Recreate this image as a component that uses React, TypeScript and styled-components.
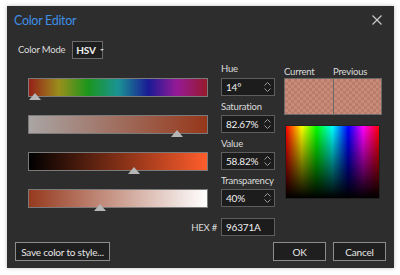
import React from 'react'
import styled, { createGlobalStyle } from 'styled-components'

const GlobalStyle = createGlobalStyle`
  html, body {
    margin: 0;
    padding: 0;
    background: #ffffff;
  }
  body {
    font-family: Lato, "Noto Sans", sans-serif;
    font-size: 9.5px;
    letter-spacing: -0.2px;
    color: #dcdcdc;
  }
`

const Page = styled.div`
  width: 400px;
  height: 275px;
  padding: 6px 0 0 7px;
  box-sizing: border-box;
`

const Window = styled.div`
  width: 387px;
  height: 262px;
  background: #2d2d2d;
  box-shadow: 0 0 4px rgba(0, 0, 0, 0.25);
  box-sizing: border-box;
  display: flex;
  flex-direction: column;
`

const TitleBar = styled.div`
  height: 27px;
  display: flex;
  align-items: center;
  justify-content: space-between;
  padding: 0 12px 0 7px;
`

const Title = styled.div`
  color: #3f8fe6;
  font-size: 12.5px;
  letter-spacing: -0.3px;
  padding-top: 2px;
`

const CloseButton = styled.div`
  width: 10px;
  height: 10px;
  display: flex;
  align-items: center;
  justify-content: center;
`

const ModeRow = styled.div`
  display: flex;
  align-items: center;
  gap: 7px;
  height: 19px;
  margin-top: 7px;
  padding-left: 11px;
`

const Dropdown = styled.div`
  height: 18px;
  width: 31px;
  border: 1px solid #6a6a6a;
  background: #1e1e1e;
  box-sizing: border-box;
  display: flex;
  align-items: center;
  gap: 4px;
  padding-left: 3px;
  color: #f0f0f0;
  font-size: 10px;
  font-weight: 700;
`

const Caret = styled.span`
  width: 0;
  height: 0;
  border-left: 2px solid transparent;
  border-right: 2px solid transparent;
  border-top: 2px solid #d0d0d0;
`

const Body = styled.div`
  display: grid;
  grid-template-columns: 180px 54px 98px;
  column-gap: 13px;
  grid-template-rows: 19px 19px 18px 19px 18px 19px 18px 19px 10px 19px;
  padding-left: 21px;
`

const FieldLabel = styled.div<{ $row: number }>`
  grid-column: 2;
  grid-row: ${(p) => p.$row};
  display: flex;
  align-items: center;
  white-space: nowrap;
`

const BarCell = styled.div<{ $row: number }>`
  grid-column: 1;
  grid-row: ${(p) => p.$row};
  position: relative;
`

const Bar = styled.div<{ $bg: string }>`
  height: 19px;
  box-sizing: border-box;
  border: 1px solid #7a7a7a;
  background: ${(p) => p.$bg};
`

const Thumb = styled.div`
  position: absolute;
  top: 15px;
  width: 0;
  height: 0;
  margin-left: -6px;
  border-left: 6px solid transparent;
  border-right: 6px solid transparent;
  border-bottom: 7px solid #b6b6b6;
`

const InputBox = styled.div<{ $row: number }>`
  grid-column: 2;
  grid-row: ${(p) => p.$row};
  height: 18px;
  border: 1px solid #5e5e5e;
  background: #1c1c1c;
  box-sizing: border-box;
  display: flex;
  align-items: center;
  justify-content: space-between;
  padding: 0 3px 0 4px;
  color: #f0f0f0;
  font-size: 10px;
`

const Spinner = styled.div`
  display: flex;
  flex-direction: column;
  gap: 2px;
`

const HexLabel = styled.div`
  grid-column: 1;
  grid-row: 10;
  display: flex;
  align-items: center;
  justify-content: flex-end;
  margin-right: -9px;
`

const PreviewColumn = styled.div`
  grid-column: 3;
  grid-row: 1 / 9;
  display: flex;
  flex-direction: column;
  margin-left: -4px;
`

const PreviewLabels = styled.div`
  display: flex;
  height: 19px;
  align-items: flex-end;
  padding-bottom: 1px;
  box-sizing: border-box;
`

const PreviewLabel = styled.div`
  width: 49px;
`

const Swatches = styled.div`
  display: flex;
  height: 37px;
  border: 1px solid #6a6a6a;
  box-sizing: border-box;
  width: 98px;
`

const Swatch = styled.div<{ $divider?: boolean }>`
  flex: 1;
  background-color: #c98b79;
  background-image:
    linear-gradient(45deg, #ba7c6b 25%, transparent 25%, transparent 75%, #ba7c6b 75%),
    linear-gradient(45deg, #ba7c6b 25%, transparent 25%, transparent 75%, #ba7c6b 75%);
  background-size: 6px 6px;
  background-position: 0 0, 3px 3px;
  border-left: ${(p) => (p.$divider ? '1px solid #6a6a6a' : 'none')};
`

const Spectrum = styled.div`
  margin-top: 10px;
  margin-left: 1px;
  width: 95px;
  height: 74px;
  flex-shrink: 0;
  border: 1px solid #222;
  box-sizing: border-box;
  background:
    linear-gradient(to bottom, rgba(0, 0, 0, 0) 0%, rgba(0, 0, 0, 1) 100%),
    linear-gradient(to right, #ff0000 0%, #ffff00 17%, #00ff00 33%, #00ffff 50%, #0000ff 67%, #ff00ff 83%, #ff0000 100%);
`

const Footer = styled.div`
  margin-top: auto;
  display: flex;
  align-items: center;
  padding: 0 8px 7px 8px;
`

const Button = styled.div<{ $width: number }>`
  width: ${(p) => p.$width}px;
  height: 19px;
  box-sizing: border-box;
  border: 1px solid #8c8c8c;
  background: #1f1f1f;
  display: flex;
  align-items: center;
  justify-content: center;
  color: #e6e6e6;
  font-size: 10px;
`

const ButtonGroup = styled.div`
  margin-left: auto;
  display: flex;
  gap: 7px;
`

const Chevron = ({ up }: { up?: boolean }) => (
  <svg width="7" height="4" viewBox="0 0 7 4">
    <path
      d={up ? 'M0.5 3.5 L3.5 0.5 L6.5 3.5' : 'M0.5 0.5 L3.5 3.5 L6.5 0.5'}
      fill="none"
      stroke="#9a9a9a"
      strokeWidth="1"
    />
  </svg>
)

const fields = [
  { label: 'Hue', value: '14°' },
  { label: 'Saturation', value: '82.67%' },
  { label: 'Value', value: '58.82%' },
  { label: 'Transparency', value: '40%' },
]

const bars = [
  {
    bg: 'linear-gradient(to right, #962019 0%, #9a8f1c 17%, #1c961c 33%, #1a9494 50%, #1a1a96 67%, #961a96 83%, #961a2c 100%)',
    pos: 7,
  },
  { bg: 'linear-gradient(to right, #a9a5a4 0%, #96371a 100%)', pos: 149 },
  { bg: 'linear-gradient(to right, #000000 0%, #ff5d2c 100%)', pos: 106 },
  { bg: 'linear-gradient(to right, #963a1e 0%, #ffffff 100%)', pos: 72 },
]

export default function App() {
  return (
    <Page>
      <GlobalStyle />
      <Window>
        <TitleBar>
          <Title>Color Editor</Title>
          <CloseButton>
            <svg width="10" height="10" viewBox="0 0 10 10">
              <path d="M0.5 0.5 L9.5 9.5 M9.5 0.5 L0.5 9.5" stroke="#cfcfcf" strokeWidth="1.1" />
            </svg>
          </CloseButton>
        </TitleBar>
        <ModeRow>
          <span>Color Mode</span>
          <Dropdown>
            HSV
            <Caret />
          </Dropdown>
        </ModeRow>
        <Body>
          {bars.map((b, i) => (
            <BarCell key={i} $row={i * 2 + 2}>
              <Bar $bg={b.bg} />
              <Thumb style={{ left: b.pos }} />
            </BarCell>
          ))}
          {fields.map((f, i) => (
            <React.Fragment key={f.label}>
              <FieldLabel $row={i * 2 + 1}>{f.label}</FieldLabel>
              <InputBox $row={i * 2 + 2}>
                {f.value}
                <Spinner>
                  <Chevron up />
                  <Chevron />
                </Spinner>
              </InputBox>
            </React.Fragment>
          ))}
          <HexLabel>HEX #</HexLabel>
          <InputBox $row={10}>96371A</InputBox>
          <PreviewColumn>
            <PreviewLabels>
              <PreviewLabel>Current</PreviewLabel>
              <PreviewLabel>Previous</PreviewLabel>
            </PreviewLabels>
            <Swatches>
              <Swatch />
              <Swatch $divider />
            </Swatches>
            <Spectrum />
          </PreviewColumn>
        </Body>
        <Footer>
          <Button $width={95}>Save color to style...</Button>
          <ButtonGroup>
            <Button $width={53}>OK</Button>
            <Button $width={53}>Cancel</Button>
          </ButtonGroup>
        </Footer>
      </Window>
    </Page>
  )
}
